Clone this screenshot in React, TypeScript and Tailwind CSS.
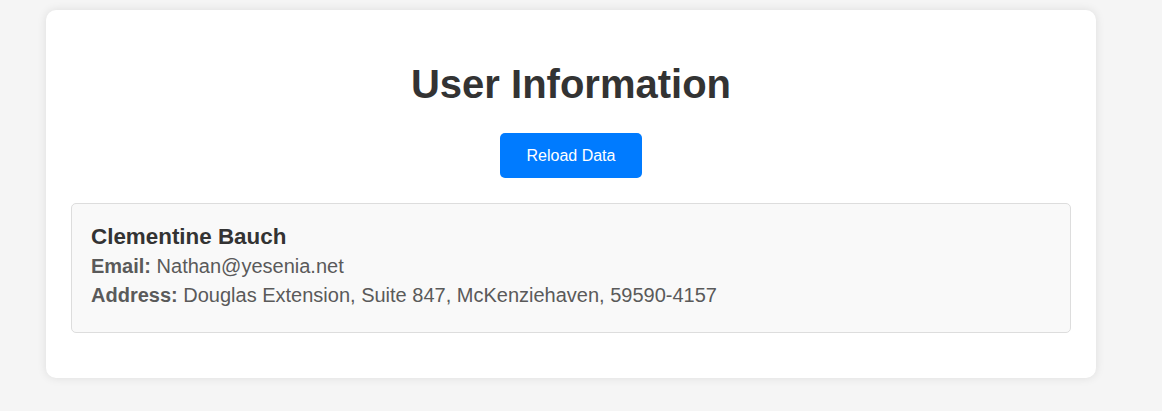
import React from 'react'

interface User {
  name: string
  email: string
  address: string
}

const user: User = {
  name: 'Clementine Bauch',
  email: 'Nathan@yesenia.net',
  address: 'Douglas Extension, Suite 847, McKenziehaven, 59590-4157',
}

const UserCard = ({ user }: { user: User }) => {
  return (
    <div className="bg-[#f9f9f9] border border-[#ddd] rounded-[5px] px-[19px] pt-[20px] pb-[22px]">
      <h3 className="text-[22.4px] leading-[26px] font-bold text-[#333] m-0">{user.name}</h3>
      <p className="text-[20px] leading-[29px] text-[#5a5a5a] mt-[2px]">
        <strong>Email:</strong> {user.email}
      </p>
      <p className="text-[20px] leading-[29px] text-[#5a5a5a]">
        <strong>Address:</strong> {user.address}
      </p>
    </div>
  )
}

const App = () => {
  return (
    <div className="min-h-[411px] bg-[#f5f5f5] pt-[10px] pl-[46px] font-['Liberation_Sans',Arial,sans-serif]">
      <div className="w-[1050px] bg-white rounded-[10px] shadow-[0_0_10px_rgba(0,0,0,0.1)] px-[25px] pt-[25px] pb-[45px]">
        <h1 className="text-[40px] leading-[46px] font-bold text-[#333] text-center mt-[26px] mb-[26px]">
          User Information
        </h1>
        <div className="flex justify-center">
          <button className="bg-[#007bff] text-white text-[16px] rounded-[5px] w-[142px] h-[45px]">
            Reload Data
          </button>
        </div>
        <div className="mt-[25px]">
          <UserCard user={user} />
        </div>
      </div>
    </div>
  )
}

export default App
